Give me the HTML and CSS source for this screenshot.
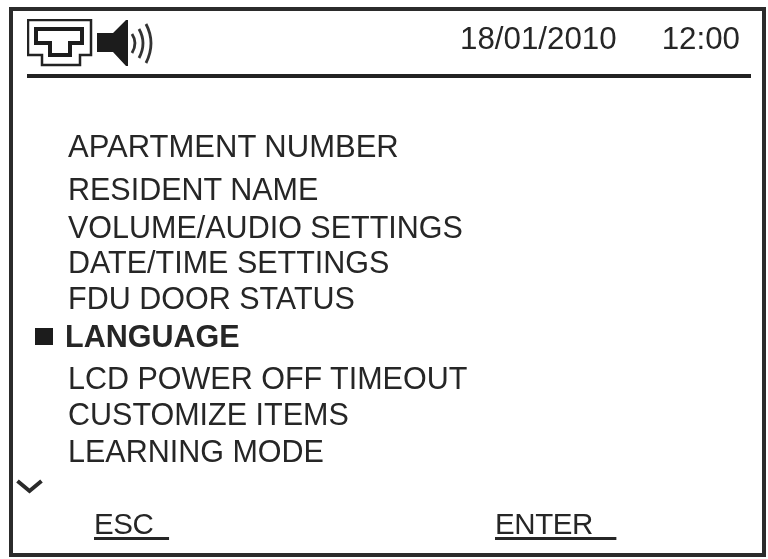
FILE: index.html
```html
<!DOCTYPE html>
<html lang="en">
<head>
<meta charset="utf-8">
<title>Settings menu</title>
<link rel="stylesheet" href="styles.css">
</head>
<body>
<div class="screen">
  <header class="top">
    <div class="icons">
      <svg class="net" viewBox="0 0 66 48" width="66" height="48" aria-hidden="true">
        <path class="thin" d="M1 1H64V36H53V46H15V36H1Z"/>
        <path class="thick" d="M9 10H55V24H43V36H23V24H9Z"/>
      </svg>
      <svg class="spk" viewBox="0 0 58 48" width="58" height="48" aria-hidden="true">
        <path class="fill" d="M0 14H16L29 1H31V47H29L16 33H0Z"/>
        <path class="wave" d="M35 15Q41 24 35 34"/>
        <path class="wave" d="M42 10Q50 24 42 39"/>
        <path class="wave" d="M49 5Q59 24 49 44"/>
      </svg>
    </div>
    <div class="clock"><span>18/01/2010</span><span>12:00</span></div>
  </header>
  <ul class="menu">
    <li class="first">APARTMENT NUMBER</li>
    <li class="wide">RESIDENT NAME</li>
    <li class="mid">VOLUME/AUDIO SETTINGS</li>
    <li class="tight">DATE/TIME SETTINGS</li>
    <li>FDU DOOR STATUS</li>
    <li class="active">LANGUAGE</li>
    <li class="wide">LCD POWER OFF TIMEOUT</li>
    <li>CUSTOMIZE ITEMS</li>
    <li class="loose">LEARNING MODE</li>
  </ul>
  <svg class="chev" viewBox="0 0 27 15" width="27" height="15" aria-hidden="true"><path d="M1.500 2L13.500 12L25.500 2"/></svg>
  <footer class="keys">
    <span class="esc">ESC&nbsp;&nbsp;</span>
    <span class="enter">ENTER&nbsp;&nbsp;&nbsp;</span>
  </footer>
</div>
</body>
</html>
```

FILE: styles.css
```css
html, body {
  margin: 0;
  padding: 0;
  background: #fff;
}
.screen {
  box-sizing: border-box;
  width: 757px;
  height: 550px;
  margin: 7px 0 0 9px;
  padding: 8px 11px 0 14px;
  border: 4px solid #2b2b2b;
  font-family: "Liberation Sans", Arial, sans-serif;
  font-size: 30.500px;
  color: #262626;
  filter: blur(0.45px);
}
.top {
  display: flex;
  justify-content: space-between;
  align-items: flex-start;
  height: 55px;
  border-bottom: 4px solid #222;
}
.icons {
  display: flex;
  gap: 4px;
}
.net, .spk { display: block; }
.thin { fill: none; stroke: #222; stroke-width: 2.500; }
.thick { fill: none; stroke: #1d1d1d; stroke-width: 4; }
.fill { fill: #1c1c1c; }
.wave { fill: none; stroke: #333; stroke-width: 2.800; }
.clock {
  display: flex;
  gap: 45px;
  margin-top: 2px;
  padding-right: 11px;
  font-size: 31.300px;
  line-height: 36px;
}
.menu {
  list-style: none;
  margin: 0;
  padding: 51px 0 0 41px;
}
.menu li {
  line-height: 36px;
  height: 36px;
}
.menu .first { font-size: 31px; }
.menu .wide { margin-top: 6px; }
.menu .mid { margin-top: 2px; }
.menu .tight { margin-top: -1px; }
.menu .loose { margin-top: 1px; }
.menu .active {
  display: flex;
  align-items: center;
  gap: 12px;
  margin-top: 2px;
  margin-left: -33px;
  font-weight: 700;
}
.menu .active::before {
  content: "";
  width: 18px;
  height: 17px;
  background: #1c1c1c;
}
.chev {
  display: block;
  margin: 10px 0 0 -11px;
}
.chev path { stroke: #2a2a2a; stroke-width: 4; fill: none; }
.keys {
  display: flex;
  margin-top: 12px;
  padding-left: 67px;
  font-size: 29.500px;
  letter-spacing: -0.400px;
}
.keys span {
  line-height: 36px;
  text-decoration: underline;
  text-decoration-thickness: 2.500px;
  text-underline-offset: 2.500px;
}
.esc { width: 401px; }
```
